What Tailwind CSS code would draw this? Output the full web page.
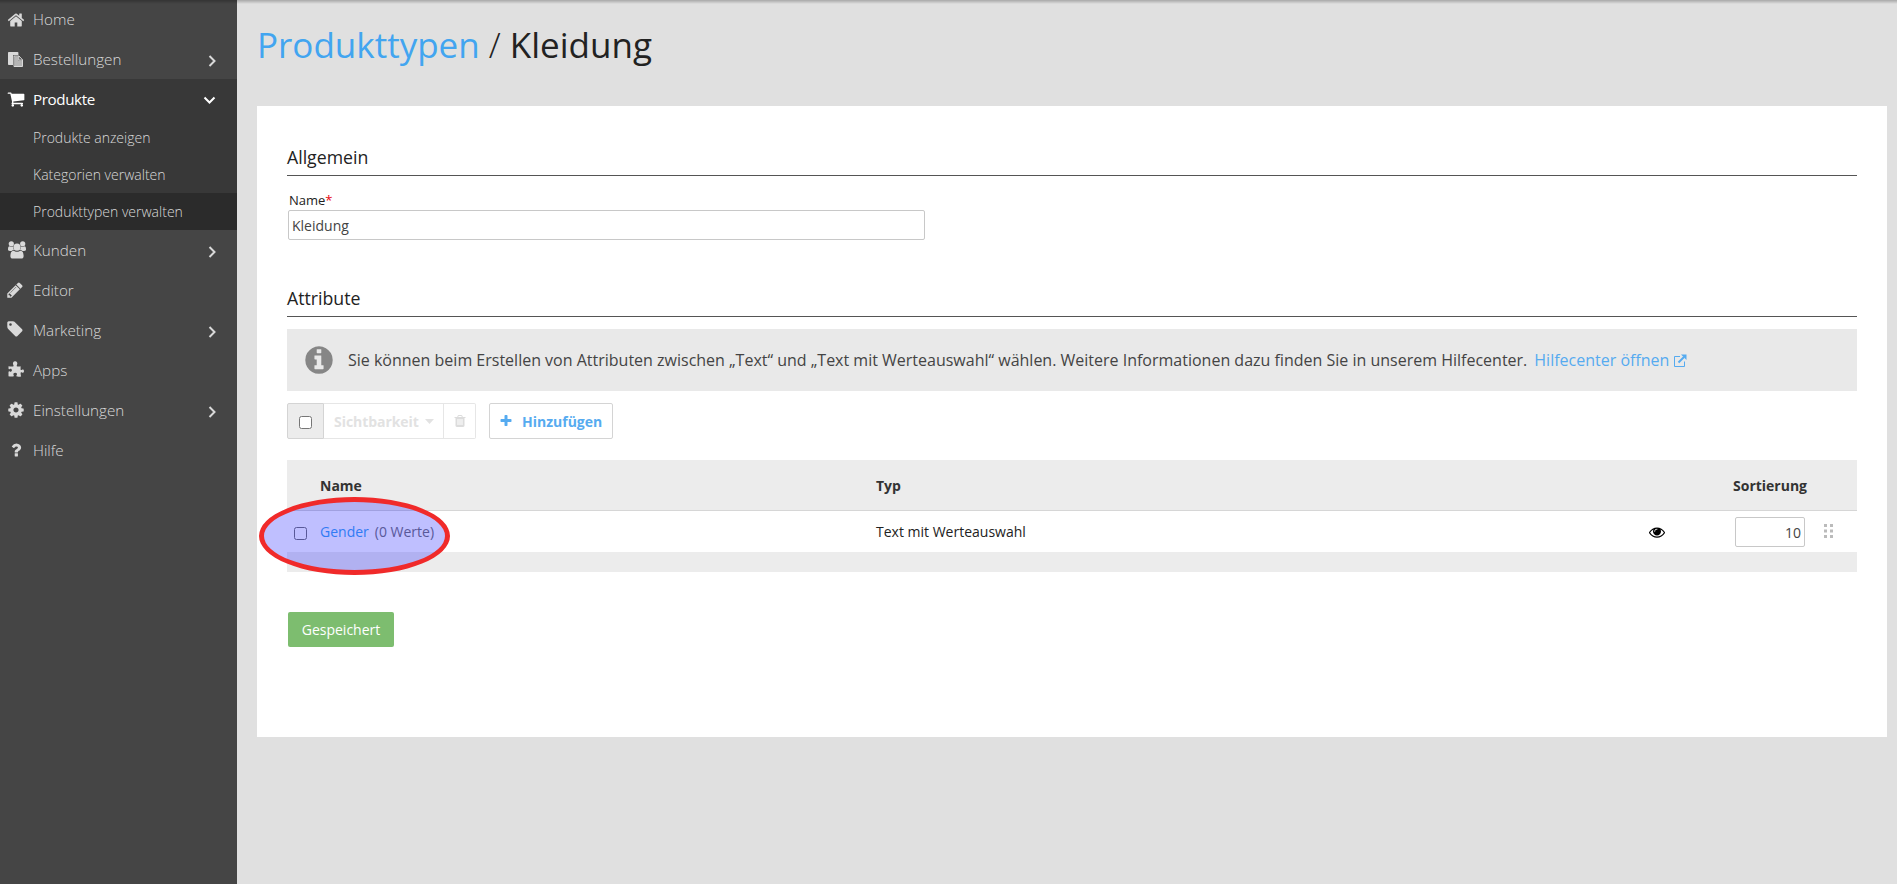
<!DOCTYPE html>
<html lang="de">
<head>
<meta charset="utf-8">
<title>Produkttypen / Kleidung</title>
<script src="https://cdn.jsdelivr.net/npm/@tailwindcss/browser@4"></script>
</head>
<body class="relative flex h-screen overflow-hidden bg-[#e0e0e0] font-['Open_Sans',sans-serif] text-[#222]">
<div class="absolute inset-x-0 top-0 h-1 bg-linear-to-b from-black/25 to-transparent"></div>

<aside class="w-[237px] shrink-0 bg-[#454545] text-[15.200px] font-light text-[#d9d9d9]">
  <a class="flex h-[39px] items-center pl-[7px]"><svg class="mr-2 size-[18px]" viewBox="0 0 1792 1792" fill="currentColor"><path d="M1472 992v480q0 26-19 45t-45 19h-384v-384h-256v384h-384q-26 0-45-19t-19-45v-480q0-1 .5-3t.5-3l575-474 575 474q1 2 1 6zm223-69l-62 74q-8 9-21 11h-3q-13 0-21-7l-692-577-692 577q-12 8-24 7-13-2-21-11l-62-74q-8-10-7-23.5t11-21.5l719-599q32-26 76-26t76 26l244 204v-195q0-14 9-23t23-9h192q14 0 23 9t9 23v408l219 182q10 8 11 21.5t-7 23.5z"/></svg><span class="tracking-[.1px]">Home</span></a>
  <a class="flex h-10 items-center pl-2 pr-5"><svg class="mr-[10px] size-[15px]" viewBox="0 0 15 15" fill="currentColor"><path d="M.8 0h8.800q.8 0 .8.800V3H6q-1 0-1 1v9H.8Q0 13 0 12.200V.8Q0 0 .8 0z"/><path d="M6.500 4.500h4v4h4V14.500h-8z" fill-opacity=".75"/><path d="M6 4h5L14.500 7.800V14.500H6zM10.800 4v4h3.700" fill="none" stroke="currentColor"/></svg><span class="grow">Bestellungen</span><svg class="mt-1 h-3 w-[9px]" viewBox="0 0 9 12" fill="none" stroke="currentColor" stroke-width="2"><path d="M1.500 1L6.500 6L1.500 11"/></svg></a>
  <div class="bg-[#383838]">
    <a class="flex h-10 items-center pl-[7px] pr-[21px] font-normal text-white"><svg class="mr-2 size-[18px]" viewBox="0 0 1792 1792" fill="currentColor"><path d="M704 1536q0 52-38 90t-90 38-90-38-38-90 38-90 90-38 90 38 38 90zm896 0q0 52-38 90t-90 38-90-38-38-90 38-90 90-38 90 38 38 90zm128-1088v512q0 24-16.500 42.500t-40.500 21.500l-1044 122q13 60 13 70 0 16-24 64h920q26 0 45 19t19 45-19 45-45 19h-1024q-26 0-45-19t-19-45q0-11 8-31.500t16-36 21.500-40 15.500-29.500l-177-823h-204q-26 0-45-19t-19-45 19-45 45-19h256q16 0 28.500 6.500t19.500 15.500 13 24.500 8 26 5.500 29.500 4.500 26h1201q26 0 45 19t19 45z"/></svg><span class="grow tracking-[-.4px]">Produkte</span><svg class="mt-[3px] h-[9px] w-[13px]" viewBox="0 0 12 9" fill="none" stroke="currentColor" stroke-width="2"><path d="M1 1.500L6 6.500L11 1.500"/></svg></a>
    <a class="flex h-[37px] items-center pl-[33px] text-[14px]">Produkte anzeigen</a>
    <a class="flex h-[37px] items-center pl-[33px] text-[14px]">Kategorien verwalten</a>
    <a class="flex h-[37px] items-center bg-[#2b2b2b] pl-[33px] text-[14px]">Produkttypen verwalten</a>
  </div>
  <a class="flex h-10 items-center pl-2 pr-5"><svg class="mr-[7px] h-[18px] w-[18px]" viewBox="0 0 18 18" fill="currentColor"><circle cx="3.300" cy="2.800" r="2.600"/><circle cx="14.700" cy="2.800" r="2.600"/><path d="M0 8.500C0 6.500.5 5.300 1.500 5.300c1 .7 2.300.8 3.500.3 0 1.300.2 2.300 1 3.300-1 0-1.800.4-2.500 1H1.800C.7 9.900 0 9.500 0 8.500zM18 8.500c0-2-.5-3.200-1.500-3.200-1 .7-2.300.8-3.500.3 0 1.300-.2 2.300-1 3.300 1 0 1.800.4 2.500 1h1.700c1.100 0 1.800-.4 1.800-1.400z"/><circle cx="9" cy="6.200" r="3.600"/><path d="M2.400 15.300c0-3.200.7-5.600 3-5.600.8 0 1.700 1.100 3.600 1.100s2.800-1.100 3.600-1.100c2.300 0 3 2.400 3 5.600 0 1.500-.9 2.300-2.300 2.300H4.700c-1.400 0-2.300-.8-2.300-2.300z"/></svg><span class="grow">Kunden</span><svg class="mt-1 h-3 w-[9px]" viewBox="0 0 9 12" fill="none" stroke="currentColor" stroke-width="2"><path d="M1.500 1L6.500 6L1.500 11"/></svg></a>
  <a class="flex h-10 items-center pl-[6px]"><svg class="mr-[9px] size-[18px]" viewBox="0 0 1792 1792" fill="currentColor"><path d="M491 1536l91-91-235-235-91 91v107h128v128h107zm523-928q0-22-22-22-10 0-17 7l-542 542q-7 7-7 17 0 22 22 22 10 0 17-7l542-542q7-7 7-17zm-54-192l416 416-832 832h-416v-416zm683 96q0 53-37 90l-166 166-416-416 166-165q36-38 90-38 53 0 91 38l235 234q37 39 37 91z"/></svg><span>Editor</span></a>
  <a class="flex h-10 items-center pl-[6px] pr-5"><svg class="mr-[9px] mb-[2px] size-[18px]" viewBox="0 0 1792 1792" fill="currentColor"><path d="M576 448q0-53-37.500-90.500t-90.500-37.500-90.500 37.500-37.500 90.500 37.500 90.500 90.500 37.500 90.500-37.500 37.500-90.500zm1067 576q0 53-37 90l-491 492q-39 37-91 37-53 0-90-37l-715-716q-38-37-64.500-101t-26.500-117v-416q0-52 38-90t90-38h416q53 0 117 26.500t102 64.500l715 714q37 39 37 91z"/></svg><span class="grow">Marketing</span><svg class="mt-1 h-3 w-[9px]" viewBox="0 0 9 12" fill="none" stroke="currentColor" stroke-width="2"><path d="M1.500 1L6.500 6L1.500 11"/></svg></a>
  <a class="flex h-10 items-center pl-2"><svg class="mr-[9px] mb-[3px] size-4" viewBox="0 0 16 16" fill="currentColor"><path d="M.5 5.200c1.500.3 3 .4 4.400.3 1-.2.800-.9.400-1.600C4.400 2.300 5.200.3 7.100.3S9.900 2.300 9 3.900c-.5.800-.5 1.300.4 1.500 1.200.2 2.600 0 3.200-.2v3.200c.1.800.8.800 1.400.3 1-.7 2-.1 2 1.300s-1 2.200-2 1.500c-.7-.5-1.400-.4-1.400.6 0 1.200.2 2.300.5 3.400-1.500.2-2.700.3-4.100.1-.8-.2-.8-.9-.3-1.600.7-1 .2-2.200-1.500-2.200s-2.200 1.200-1.600 2.200c.4.700.3 1.200-.5 1.400-1.500.2-3 .2-4.600-.2V11c.1-.8.800-.9 1.400-.5 1 .7 2 0 2-1.200s-1-2-2-1.300c-.6.500-1.300.4-1.400-.4z"/></svg><span>Apps</span></a>
  <a class="flex h-10 items-center pl-[7px] pr-5"><svg class="mr-2 mb-px size-[18px]" viewBox="0 0 1792 1792" fill="currentColor"><path d="M1152 896q0-106-75-181t-181-75-181 75-75 181 75 181 181 75 181-75 75-181zm512-109v222q0 12-8 23t-20 13l-185 28q-19 54-39 91 35 50 107 138 10 12 10 25t-9 23q-27 37-99 108t-94 71q-12 0-26-9l-138-108q-44 23-91 38-16 136-29 186-7 28-36 28h-222q-14 0-24.500-8.500t-11.500-21.500l-28-184q-49-16-90-37l-141 107q-10 9-25 9-14 0-25-11-126-114-165-168-7-10-7-23 0-12 8-23 15-21 51-66.500t54-70.500q-27-50-41-99l-183-27q-13-2-21-12.500t-8-23.500v-222q0-12 8-23t19-13l186-28q14-46 39-92-40-57-107-138-10-12-10-24 0-10 9-23 26-36 98.500-107.500t94.500-71.500q13 0 26 10l138 107q44-23 91-38 16-136 29-186 7-28 36-28h222q14 0 24.500 8.500t11.500 21.500l28 184q49 16 90 37l142-107q9-9 24-9 13 0 25 10 129 119 165 170 7 8 7 22 0 12-8 23-15 21-51 66.500t-54 70.500q26 50 41 98l183 28q13 2 21 12.500t8 23.500z"/></svg><span class="grow">Einstellungen</span><svg class="mt-1 h-3 w-[9px]" viewBox="0 0 9 12" fill="none" stroke="currentColor" stroke-width="2"><path d="M1.500 1L6.500 6L1.500 11"/></svg></a>
  <a class="flex h-10 items-center pl-[7px]"><svg class="mr-2 mb-px size-[18px]" viewBox="0 0 1792 1792" fill="currentColor"><path d="M1088 1256v240q0 16-12 28t-28 12h-240q-16 0-28-12t-12-28v-240q0-16 12-28t28-12h240q16 0 28 12t12 28zm316-600q0 54-15.500 101t-35 76.500-55 59.500-57.500 43.500-61 35.500q-41 23-68.500 65t-27.500 67q0 17-12 32.500t-28 15.500h-240q-15 0-25.500-18.500t-10.500-37.500v-45q0-83 65-156.500t143-108.500q59-27 84-56t25-76q0-42-46.500-74t-107.500-32q-65 0-108 29-35 25-107 115-13 16-31 16-12 0-25-8l-164-125q-13-10-15.500-25t5.500-28q160-266 464-266 80 0 161 31t146 83 106 127.500 41 158.500z"/></svg><span>Hilfe</span></a>
</aside>

<main class="grow pl-5 pr-[10px]">
  <h1 class="flex h-[106px] items-start pt-[20px] text-[35px] leading-[49px] font-light whitespace-pre"><span class="font-normal text-[#42a5f0]">Produkttypen</span> / <span class="font-normal">Kleidung</span></h1>
  <section class="h-[631px] bg-white px-[30px] pt-[38px]">
    <h2 class="h-[32px] border-b border-[#555] text-[17.700px] leading-[27px]">Allgemein</h2>
    <label class="mt-[15px] block h-[19px] pl-[2px] text-[13px] leading-[18px]">Name<span class="text-red-600">*</span></label>
    <div class="ml-px flex h-[30px] w-[637px] items-center rounded-xs border border-[#c8c8c8] pl-[3px] text-[14px] text-[#444]">Kleidung</div>
    <h2 class="mt-[45px] h-[32px] border-b border-[#555] text-[17.700px] leading-[27px]">Attribute</h2>
    <div class="mt-3 flex h-[62px] items-center bg-[#e9e9e9] pl-4 text-[16px] text-[#444]">
      <svg class="mr-[13px] size-[32px]" viewBox="0 0 1792 1792" fill="#868686"><path d="M1152 1376v-160q0-14-9-23t-23-9h-96v-512q0-14-9-23t-23-9h-320q-14 0-23 9t-9 23v160q0 14 9 23t23 9h96v320h-96q-14 0-23 9t-9 23v160q0 14 9 23t23 9h448q14 0 23-9t9-23zm-128-896v-160q0-14-9-23t-23-9h-192q-14 0-23 9t-9 23v160q0 14 9 23t23 9h192q14 0 23-9t9-23zm640 416q0 209-103 385.500t-279.500 279.500-385.500 103-385.500-103-279.500-279.500-103-385.500 103-385.500 279.500-279.500 385.500-103 385.500 103 279.500 279.500 103 385.500z"/></svg>
      <span>Sie können beim Erstellen von Attributen zwischen „Text“ und „Text mit Werteauswahl“ wählen. Weitere Informationen dazu finden Sie in unserem Hilfecenter.</span>
      <a class="ml-[7px] flex items-center text-[#56abf0]">Hilfecenter öffnen<svg class="ml-[5px] size-[13px]" viewBox="0 0 13 13" fill="none" stroke="currentColor"><path d="M6 2.500H.5v10h10V7.500"/><path d="M4.500 8.500L10 3" stroke-width="2"/><path d="M7 .5h5.500V6z" fill="currentColor" stroke="none"/></svg></a>
    </div>
    <div class="mt-3 flex h-9 text-[14px] font-bold">
      <div class="flex w-[37px] items-center justify-center rounded-l-xs border border-[#d4d4d4] bg-[#ececec] pt-[3px]"><span class="size-[13px] rounded-[2.500px] border border-[#767676] bg-white"></span></div>
      <div class="flex w-[120px] items-center border-y border-r border-[#e6e6e6] pl-[10px] text-[#e2e2e2]"><span class="tracking-[-.05px]">Sichtbarkeit</span><svg class="ml-[6px] h-[5px] w-[9px]" viewBox="0 0 9 5" fill="currentColor"><path d="M0 0h9L4.500 5z"/></svg></div>
      <div class="flex w-8 items-center justify-center rounded-r-xs border-y border-r border-[#e6e6e6] text-[#dcdcdc]"><svg class="size-[14px]" viewBox="0 0 1792 1792" fill="currentColor"><path d="M704 1376v-704q0-14-9-23t-23-9h-64q-14 0-23 9t-9 23v704q0 14 9 23t23 9h64q14 0 23-9t9-23zm256 0v-704q0-14-9-23t-23-9h-64q-14 0-23 9t-9 23v704q0 14 9 23t23 9h64q14 0 23-9t9-23zm256 0v-704q0-14-9-23t-23-9h-64q-14 0-23 9t-9 23v704q0 14 9 23t23 9h64q14 0 23-9t9-23zm-544-992h448l-48-117q-7-9-17-11h-317q-10 2-17 11zm928 32v64q0 14-9 23t-23 9h-96v948q0 83-47 143.500t-113 60.500h-832q-66 0-113-58.500t-47-141.500v-952h-96q-14 0-23-9t-9-23v-64q0-14 9-23t23-9h309l70-167q15-37 54-63t79-26h320q40 0 79 26t54 63l70 167h309q14 0 23 9t9 23z"/></svg></div>
      <div class="ml-[13px] flex w-[124px] items-center rounded-xs border border-[#d4d4d4] pl-[9px] text-[#56abf0]"><svg class="mr-[9px] size-[14px]" viewBox="0 0 1792 1792" fill="currentColor"><path d="M1600 736v192q0 40-28 68t-68 28h-416v416q0 40-28 68t-68 28h-192q-40 0-68-28t-28-68v-416h-416q-40 0-68-28t-28-68v-192q0-40 28-68t68-28h416v-416q0-40 28-68t68-28h192q40 0 68 28t28 68v416h416q40 0 68 28t28 68z"/></svg>Hinzufügen</div>
    </div>
    <div class="relative mt-[21px] text-[14px]">
      <div class="flex h-[51px] items-center border-b border-[#d6d6d6] bg-[#ececec] pl-[33px] font-bold text-[#333]"><span class="w-[556px]">Name</span><span class="w-[857px]">Typ</span><span>Sortierung</span></div>
      <div class="flex h-[41px] items-center pl-[7px] text-[#222]">
        <span class="mt-[3px] mr-[13px] size-[13px] rounded-[2.500px] border border-[#767676]"></span>
        <span class="flex w-[556px] gap-[6px]"><span class="text-[#42a5f0]">Gender</span><span class="text-[#777]">(0 Werte)</span></span>
        <span class="w-[773px]">Text mit Werteauswahl</span>
        <svg class="h-4 w-4" viewBox="0 0 1792 1792" fill="#000"><path d="M1664 960q-152-236-381-353 61 104 61 225 0 185-131.500 316.500t-316.500 131.500-316.500-131.500-131.500-316.500q0-121 61-225-229 117-381 353 133 205 333.500 326.500t434.500 121.500 434.500-121.500 333.500-326.500zm-720-384q0-20-14-34t-34-14q-125 0-214.500 89.500t-89.500 214.500q0 20 14 34t34 14 34-14 14-34q0-86 61-147t147-61q20 0 34-14t14-34zm848 384q0 34-20 69-140 230-376.500 368.500t-499.500 138.500-499.500-139-376.500-368q-20-35-20-69t20-69q140-229 376.500-368t499.500-139 499.500 139 376.500 368q20 35 20 69z"/></svg>
        <span class="mt-px ml-[70px] flex h-[30px] w-[70px] items-center justify-end rounded-xs border border-[#c8c8c8] pr-[3px] text-[#444]">10</span>
        <svg class="mb-[2px] ml-[19px] h-[14px] w-[9px]" viewBox="0 0 9 14" fill="#bbb"><path d="M0 0h3v3H0zM6 0h3v3H6zM0 5.500h3v3H0zM6 5.500h3v3H6zM0 11h3v3H0zM6 11h3v3H6z"/></svg>
      </div>
      <div class="h-5 bg-[#ececec]"></div>
      <div class="absolute top-[37px] -left-[28px] h-[78px] w-[191px] rounded-[50%] border-5 border-[#f02a2a] bg-[#0000ff]/25"></div>
    </div>
    <button class="mt-10 ml-px block h-[35px] w-[106px] rounded-xs bg-[#7dbd6f] text-[14px] text-white">Gespeichert</button>
  </section>
</main>
</body>
</html>
